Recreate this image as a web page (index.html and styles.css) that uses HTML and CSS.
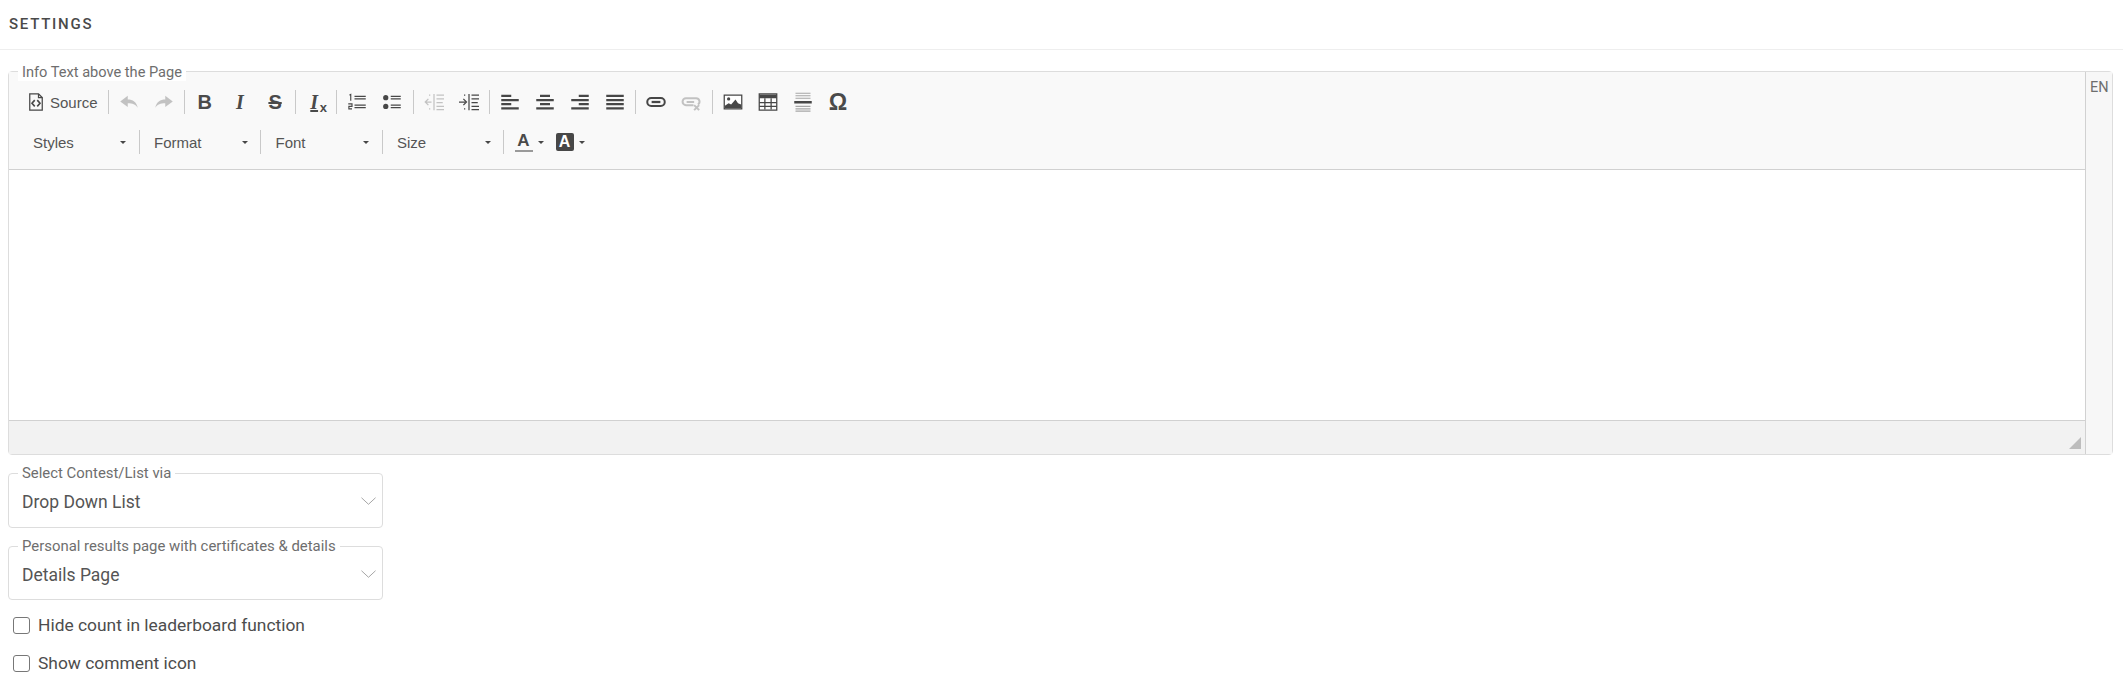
FILE: index.html
```html
<!DOCTYPE html>
<html lang="en">
  <head>
    <meta charset="UTF-8" />
    <meta name="viewport" content="width=device-width, initial-scale=1.0" />
    <title>Settings</title>
    <link rel="stylesheet" href="styles.css">
  </head>
  <body>
    <h2 class="page-title">SETTINGS</h2>
    <div class="content">
      <div class="frame">
        <span class="frame-label frame-label-editor">Info Text above the Page</span>
        <div class="editor">
          <div class="toolbar">
            <div class="tool-row">
              <a class="tool tool-source">
                <svg viewBox="0 0 16 16" class="icon"><path d="M3 1.500h7l3 3v10H3z" fill="none" stroke="#474747" stroke-width="1"/><path d="M10 1.500v3h3" fill="none" stroke="#474747"/><path d="M7 6.500L4.800 9 7 11.500M9 6.500L11.200 9 9 11.500" fill="none" stroke="#474747" stroke-width="1.300"/></svg>
                <span>Source</span>
              </a>
              <i class="sep"></i>
              <a class="tool off"><svg viewBox="0 0 16 16" class="icon"><path d="M1 7.500L7 3v3c4 0 7 2 8 6.500C13 10 11 9 7 9v3z" fill="#474747"/></svg></a>
              <a class="tool off"><svg viewBox="0 0 16 16" class="icon"><path d="M15 7.500L9 3v3C5 6 2 8 1 12.500 3 10 5 9 9 9v3z" fill="#474747"/></svg></a>
              <i class="sep"></i>
              <a class="tool"><span class="glyph glyph-b">B</span></a>
              <a class="tool"><span class="glyph glyph-i">I</span></a>
              <a class="tool"><span class="glyph glyph-s">S</span></a>
              <i class="sep"></i>
              <a class="tool"><span class="glyph glyph-i glyph-under">I</span><span class="glyph-x">x</span></a>
              <i class="sep"></i>
              <a class="tool"><svg viewBox="0 0 16 16" class="icon"><path d="M6 3.500h9M6 5.500h9M6 10.500h9M6 12.500h9" stroke="#474747" stroke-width="1"/><path d="M2 2.500l1-.5v5M1 9.500h3v2H1.500v2H4" fill="none" stroke="#474747" stroke-width=".9"/></svg></a>
              <a class="tool"><svg viewBox="0 0 16 16" class="icon"><circle cx="3" cy="4.500" r="2.100" fill="#474747"/><circle cx="3" cy="11.500" r="2.100" fill="#474747"/><path d="M7 3.500h8M7 5.500h8M7 10.500h8M7 12.500h8" stroke="#474747"/></svg></a>
              <i class="sep"></i>
              <a class="tool off"><svg viewBox="0 0 16 16" class="icon"><use href="#i-outdent"/></svg></a>
              <a class="tool"><svg viewBox="0 0 16 16" class="icon"><use href="#i-indent"/></svg></a>
              <i class="sep"></i>
              <a class="tool"><svg viewBox="0 0 16 16" class="icon"><path d="M1 3h8M1 6.500h14M1 9.700h8M1 13h14" stroke="#474747" stroke-width="1.800"/></svg></a>
              <a class="tool"><svg viewBox="0 0 16 16" class="icon"><path d="M4 3h8M1 6.500h14M4 9.700h8M1 13h14" stroke="#474747" stroke-width="1.800"/></svg></a>
              <a class="tool"><svg viewBox="0 0 16 16" class="icon"><path d="M7 3h8M1 6.500h14M7 9.700h8M1 13h14" stroke="#474747" stroke-width="1.800"/></svg></a>
              <a class="tool"><svg viewBox="0 0 16 16" class="icon"><path d="M1 3h14M1 6.500h14M1 9.700h14M1 13h14" stroke="#474747" stroke-width="1.800"/></svg></a>
              <i class="sep"></i>
              <a class="tool"><svg viewBox="0 0 16 16" class="icon"><rect x="1" y="4.800" width="14" height="6.400" rx="3.200" fill="none" stroke="#474747" stroke-width="1.600"/><path d="M4.500 8h7" stroke="#474747" stroke-width="1.800"/></svg></a>
              <a class="tool off"><svg viewBox="0 0 16 16" class="icon"><path d="M10 10.500H4a2.700 2.700 0 010-5.500h8a2.700 2.700 0 011.500 5M4.500 8h6" fill="none" stroke="#474747" stroke-width="1.600"/><path d="M10.500 10.500l4 4M14.500 10.500l-4 4" stroke="#474747" stroke-width="1.600"/></svg></a>
              <i class="sep"></i>
              <a class="tool"><svg viewBox="0 0 16 16" class="icon"><rect x="1" y="2.500" width="14" height="11" fill="#fff" stroke="#474747"/><circle cx="4.500" cy="5.500" r="1.300" fill="#474747"/><path d="M1.500 13v-2l3-2 2 1 3.500-4 2 3 2.500 1v3z" fill="#474747"/></svg></a>
              <a class="tool"><svg viewBox="0 0 16 16" class="icon"><rect x="1" y="1.500" width="14" height="13" fill="#fff" stroke="#474747"/><path d="M1 2h14v3H1z" fill="#474747"/><path d="M1 8.500h14M1 11.500h14M5.500 5v9M10.500 5v9" stroke="#474747"/></svg></a>
              <a class="tool"><svg viewBox="0 0 16 16" class="icon"><path d="M2 1h12M2 3h12M2 5h12M2 11.500h12M2 13.500h12M2 15.300h12" stroke="#a6a6a6" stroke-width=".9"/><path d="M1 8.200h14" stroke="#474747" stroke-width="2"/></svg></a>
              <a class="tool"><span class="glyph glyph-omega">Ω</span></a>
            </div>
            <div class="tool-row">
              <a class="combo combo-first"><span>Styles</span><i class="arrow"></i></a>
              <i class="sep"></i>
              <a class="combo"><span>Format</span><i class="arrow"></i></a>
              <i class="sep"></i>
              <a class="combo"><span>Font</span><i class="arrow"></i></a>
              <i class="sep"></i>
              <a class="combo"><span>Size</span><i class="arrow"></i></a>
              <i class="sep"></i>
              <a class="color-tool"><span class="glyph glyph-color">A</span><i class="arrow"></i></a>
              <a class="color-tool"><span class="glyph glyph-bg">A</span><i class="arrow"></i></a>
            </div>
          </div>
          <div class="editor-body"></div>
          <div class="editor-foot"><i class="resizer"></i></div>
        </div>
        <div class="lang-tab">EN</div>
      </div>

      <div class="select-box">
        <span class="frame-label">Select Contest/List via</span>
        <span class="select-value">Drop Down List</span>
        <svg class="chevron" viewBox="0 0 16 8"><path d="M.5.500L8 7.500 15.500.500" fill="none" stroke="#a0a0a0" stroke-width="1"/></svg>
      </div>
      <div class="select-box">
        <span class="frame-label">Personal results page with certificates &amp; details</span>
        <span class="select-value">Details Page</span>
        <svg class="chevron" viewBox="0 0 16 8"><path d="M.5.500L8 7.500 15.500.500" fill="none" stroke="#a0a0a0" stroke-width="1"/></svg>
      </div>

      <label class="check-row"><input type="checkbox" /><span>Hide count in leaderboard function</span></label>
      <label class="check-row"><input type="checkbox" /><span>Show comment icon</span></label>
    </div>

    <svg class="defs" width="0" height="0">
      <symbol id="i-indent" viewBox="0 0 16 16"><path d="M8 1.500v13" stroke="#474747" stroke-width="1"/><path d="M10 2.500h6M10 5.500h6M10 8.500h5M10 11.500h6M10 14h6" stroke="#474747"/><path d="M0 8h5M3.500 5.500L6 8l-2.500 2.500" fill="none" stroke="#474747"/><path d="M4 2.500h2M4 13.500h2" stroke="#474747" stroke-dasharray="1 1"/></symbol>
      <symbol id="i-outdent" viewBox="0 0 16 16"><path d="M8 1.500v13" stroke="#474747" stroke-width="1"/><path d="M10 2.500h6M10 5.500h6M10 8.500h5M10 11.500h6M10 14h6" stroke="#474747"/><path d="M6 8H1M3.500 5.500L1 8l2.500 2.500" fill="none" stroke="#474747"/><path d="M4 2.500h2M4 13.500h2" stroke="#474747" stroke-dasharray="1 1"/></symbol>
    </svg>
  </body>
</html>
```

FILE: styles.css
```css
* {
  box-sizing: border-box;
  margin: 0;
  padding: 0;
}
body {
  font-family: Roboto, "Liberation Sans", sans-serif;
  background-color: #fff;
  color: #555;
}
.page-title {
  height: 50px;
  padding: 16px 9px 0;
  font-size: 15px;
  font-weight: 500;
  letter-spacing: 1.750px;
  line-height: 17px;
  color: #4a4a4a;
  border-bottom: 1px solid #eee;
}
.content {
  padding: 21px 10px 0 8px;
}
.frame {
  position: relative;
  display: flex;
  height: 384px;
  border: 1px solid #ddd;
  border-radius: 4px;
}
.frame-label {
  position: absolute;
  top: -9px;
  left: 9px;
  padding: 0 4px;
  background-color: #fff;
  font-size: 14.900px;
  line-height: 17px;
  color: #6e6e6e;
  white-space: nowrap;
}
.frame-label-editor {
  top: -8px;
  font-size: 14.600px;
}
.editor {
  flex: 1;
  display: flex;
  flex-direction: column;
  border-right: 1px solid #d1d1d1;
}
.toolbar {
  height: 98px;
  background-color: #f9f9f9;
  border-bottom: 1px solid #d1d1d1;
  padding: 12px 0 0 13px;
}
.tool-row {
  display: flex;
  align-items: center;
  height: 36px;
  margin-bottom: 4px;
}
.tool {
  width: 35.125px;
  height: 36px;
  display: flex;
  align-items: center;
  justify-content: center;
  position: relative;
  flex: none;
}
.tool.off {
  opacity: 0.3;
}
.tool-source {
  width: 83px;
  justify-content: flex-start;
  gap: 4px;
  padding-left: 4px;
  font: 15px "Liberation Sans", sans-serif;
  color: #555;
}
.icon {
  width: 20px;
  height: 20px;
  display: block;
  flex: none;
}
.sep {
  flex: none;
  width: 6px;
  height: 24px;
  background: linear-gradient(#c9c9c9, #c9c9c9) center / 1px 100% no-repeat;
}
.glyph {
  color: #4a4a4a;
  line-height: 20px;
}
.glyph-b {
  font: 700 20px "Liberation Sans", sans-serif;
}
.glyph-i {
  font: italic 700 20px "Liberation Serif", serif;
}
.glyph-s {
  font: 700 20px "Liberation Sans", sans-serif;
  text-decoration: line-through;
}
.glyph-under {
  text-decoration: underline;
  margin-left: -4px;
}
.glyph-x {
  position: absolute;
  left: 21px;
  top: 16px;
  font: 700 13px "Liberation Sans", sans-serif;
  color: #4a4a4a;
}
.glyph-omega {
  font: 700 23px "Liberation Sans", sans-serif;
}
.combo {
  flex: none;
  width: 115.500px;
  height: 36px;
  display: flex;
  align-items: center;
  justify-content: space-between;
  padding: 0 10px 0 12px;
  font: 15px "Liberation Sans", sans-serif;
  color: #555;
}
.combo-first {
  width: 114px;
  padding-left: 11px;
  padding-right: 10px;
}
.arrow {
  display: block;
  flex: none;
  width: 0;
  height: 0;
  border-left: 3px solid transparent;
  border-right: 3px solid transparent;
  border-top: 3px solid #474747;
}
.color-tool {
  flex: none;
  width: 41px;
  display: flex;
  align-items: center;
  gap: 5px;
  padding-left: 8px;
}
.glyph-color {
  width: 18px;
  height: 19px;
  text-align: center;
  font: 700 17px/16px "Liberation Sans", sans-serif;
  border-bottom: 2px solid #9a9a9a;
}
.glyph-bg {
  width: 18px;
  height: 18px;
  text-align: center;
  font: 700 16px/18px "Liberation Sans", sans-serif;
  color: #fff;
  background-color: #474747;
  border-radius: 2px;
}
.editor-body {
  height: 250px;
  background-color: #fff;
}
.editor-foot {
  flex: 1;
  position: relative;
  background-color: #f2f2f2;
  border-top: 1px solid #d1d1d1;
}
.resizer {
  position: absolute;
  right: 4px;
  bottom: 5px;
  width: 0;
  height: 0;
  border-left: 12px solid transparent;
  border-bottom: 12px solid #bdbdbd;
}
.lang-tab {
  width: 26px;
  background-color: #f7f7f7;
  padding: 7px 0 0 4px;
  font-size: 14.500px;
  line-height: 17px;
  color: #6e6e6e;
}
.select-box {
  position: relative;
  height: 55px;
  margin-top: 18px;
  width: 375px;
  border: 1px solid #ddd;
  border-radius: 4px;
  display: flex;
  align-items: center;
  padding: 3px 13px 0;
}
.select-box + .select-box {
  height: 54px;
}
.select-value {
  font-size: 17.500px;
  line-height: 20px;
  color: #555;
}
.chevron {
  position: absolute;
  right: 6px;
  top: 23px;
  width: 15px;
  height: 8px;
}
.check-row {
  display: flex;
  align-items: center;
  gap: 8px;
  height: 38px;
  padding-left: 5px;
  font-size: 17.400px;
  color: #4d4d4d;
}
.select-box + .check-row {
  margin-top: 6px;
}
.check-row input {
  appearance: none;
  width: 17px;
  height: 17px;
  border: 1px solid #777;
  border-radius: 3px;
  background-color: #fff;
}
.defs {
  position: absolute;
}
```
